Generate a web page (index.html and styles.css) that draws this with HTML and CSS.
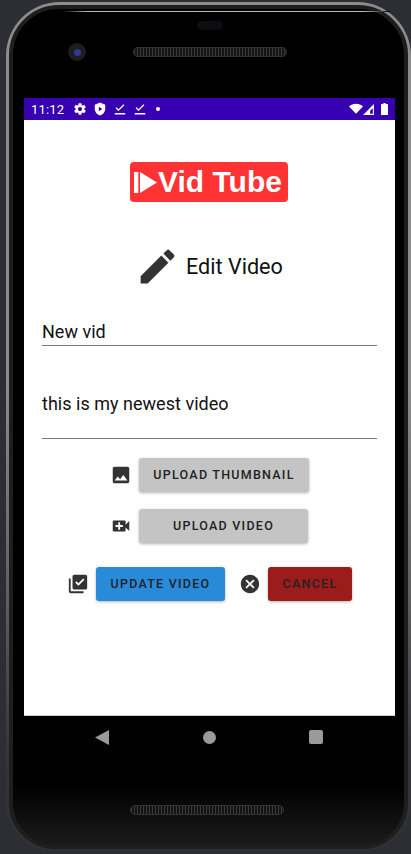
FILE: index.html
```html
<!DOCTYPE html>
<html lang="en">
<head>
    <meta charset="UTF-8">
    <meta name="viewport" content="width=device-width, initial-scale=1.0">
    <title>Edit Video</title>
    <link rel="stylesheet" href="styles.css">
</head>
<body>
    <div class="phone">
        <div class="phone-inner">
            <div class="bezel-top">
                <div class="glare"></div>
                <div class="pill"></div>
                <div class="sensor-row">
                    <div class="camera"><div class="lens"></div></div>
                    <div class="speaker"></div>
                </div>
            </div>

            <div class="screen">
                <div class="status-bar">
                    <span class="clock">11:12</span>
                    <svg class="status-icon" viewBox="0 0 24 24"><path d="M19.43 12.98c.04-.32.07-.64.07-.98s-.03-.66-.07-.98l2.11-1.65c.19-.15.24-.42.12-.64l-2-3.46c-.12-.22-.39-.3-.61-.22l-2.49 1c-.52-.4-1.08-.73-1.69-.98l-.38-2.65C14.46 2.18 14.25 2 14 2h-4c-.25 0-.46.18-.49.42l-.38 2.65c-.61.25-1.17.59-1.69.98l-2.49-1c-.23-.09-.49 0-.61.22l-2 3.46c-.13.22-.07.49.12.64l2.11 1.65c-.04.32-.07.65-.07.98s.03.66.07.98l-2.11 1.65c-.19.15-.24.42-.12.64l2 3.46c.12.22.39.3.61.22l2.49-1c.52.4 1.08.73 1.69.98l.38 2.65c.03.24.24.42.49.42h4c.25 0 .46-.18.49-.42l.38-2.65c.61-.25 1.17-.59 1.69-.98l2.49 1c.23.09.49 0 .61-.22l2-3.46c.12-.22.07-.49-.12-.64l-2.11-1.65zM12 15.5c-1.93 0-3.5-1.57-3.5-3.5s1.57-3.5 3.5-3.5 3.5 1.57 3.5 3.5-1.57 3.5-3.5 3.5z"/></svg>
                    <svg class="status-icon" viewBox="0 0 24 24"><path fill-rule="evenodd" d="M12 1 3 4.5v6.5c0 5.5 3.8 10.7 9 12 5.2-1.3 9-6.5 9-12V4.500L12 1zM10 8v8l6-4-6-4z"/></svg>
                    <svg class="status-icon" viewBox="0 0 24 24"><path d="M3 19h18v2.500H3zM9.500 15.500 4.500 10.500 6 9l3.500 3.500L18 4l1.500 1.500z"/></svg>
                    <svg class="status-icon" viewBox="0 0 24 24"><path d="M3 19h18v2.500H3zM9.500 15.500 4.500 10.500 6 9l3.500 3.500L18 4l1.500 1.500z"/></svg>
                    <span class="status-dot"></span>
                    <span class="status-right">
                        <svg class="wifi" viewBox="0 0 24 24"><path d="M12 20 0 7.500C3.200 4.600 7.400 3 12 3s8.800 1.600 12 4.500L12 20z"/></svg>
                        <svg class="signal" viewBox="0 0 24 24"><path fill-rule="evenodd" d="M2 22 22 2v20H2zM20 9.500 15 14.500V20h5V9.500z"/></svg>
                        <svg class="battery" viewBox="0 0 12 22" preserveAspectRatio="none"><path d="M4 0h4v2h3c.6 0 1 .4 1 1v18c0 .6-.4 1-1 1H1c-.6 0-1-.4-1-1V3c0-.6.4-1 1-1h3z"/></svg>
                    </span>
                </div>

                <div class="content">
                    <div class="logo">
                        <svg class="logo-icon" viewBox="0 0 24 21"><path d="M0 0h4.300v21H0zM6 0l17 10.500L6 21z"/></svg>
                        <span>Vid Tube</span>
                    </div>

                    <div class="page-title">
                        <svg class="title-icon" viewBox="0 0 24 24"><path d="M3 17.250V21h3.750L17.810 9.940l-3.750-3.750L3 17.250zM20.710 7.040c.39-.39.39-1.020 0-1.410l-2.340-2.340c-.39-.39-1.020-.39-1.410 0l-1.830 1.830 3.750 3.750 1.830-1.830z"/></svg>
                        <h1>Edit Video</h1>
                    </div>

                    <div class="field field-title">New vid</div>
                    <div class="field field-desc">this is my newest video</div>

                    <div class="action-row row-thumb">
                        <svg class="btn-icon" viewBox="0 0 24 24"><path d="M21 19V5c0-1.100-.9-2-2-2H5c-1.100 0-2 .9-2 2v14c0 1.100.9 2 2 2h14c1.100 0 2-.9 2-2zM8.500 13.500l2.500 3.010L14.500 12l4.500 6H5l3.500-4.500z"/></svg>
                        <button class="btn btn-grey btn-thumb">Upload Thumbnail</button>
                    </div>
                    <div class="action-row row-video">
                        <svg class="btn-icon" viewBox="0 0 24 24"><path d="M17 10.500V7c0-.55-.45-1-1-1H4c-.55 0-1 .45-1 1v10c0 .55.45 1 1 1h12c.55 0 1-.45 1-1v-3.500l4 4v-11l-4 4zM14 13h-3v3H9v-3H6v-2h3V8h2v3h3v2z"/></svg>
                        <button class="btn btn-grey btn-video">Upload Video</button>
                    </div>
                    <div class="action-row row-submit">
                        <svg class="btn-icon" viewBox="0 0 24 24"><path d="M20 2H8c-1.100 0-2 .9-2 2v12c0 1.100.9 2 2 2h12c1.100 0 2-.9 2-2V4c0-1.100-.9-2-2-2zm-7.530 12L9 10.500l1.400-1.410 2.070 2.080L17.600 6 19 7.410 12.470 14zM4 6H2v14c0 1.100.9 2 2 2h14v-2H4V6z"/></svg>
                        <button class="btn btn-blue">Update Video</button>
                        <svg class="btn-icon icon-cancel" viewBox="0 0 24 24"><path d="M12 2C6.470 2 2 6.470 2 12s4.470 10 10 10 10-4.470 10-10S17.530 2 12 2zm5 13.590L15.590 17 12 13.410 8.410 17 7 15.590 10.590 12 7 8.410 8.410 7 12 10.590 15.590 7 17 8.410 13.410 12 17 15.590z"/></svg>
                        <button class="btn btn-red">Cancel</button>
                    </div>
                </div>
            </div>

            <div class="bezel-bottom">
                <div class="nav-bar">
                    <svg class="nav-back" viewBox="0 0 14 15"><path d="M14 0v15L0 7.500z"/></svg>
                    <span class="nav-home"></span>
                    <span class="nav-recent"></span>
                </div>
                <div class="speaker speaker-bottom"></div>
            </div>
        </div>
    </div>
</body>
</html>
```

FILE: styles.css
```css
body {
    margin: 0;
    width: 411px;
    height: 854px;
    overflow: hidden;
    background-color: #2c2e33;
    font-family: Roboto, sans-serif;
}
.phone {
    box-sizing: border-box;
    width: 405px;
    height: 850px;
    margin: 2px 0 0 6px;
    padding: 3px;
    border-radius: 54px 54px 50px 50px;
    background: linear-gradient(to bottom, #8c8c8c 0, #8c8c8c 45%, #5a5b5d 72%, #35363a 88%, #2f3034 100%);
}
.phone-inner {
    box-sizing: border-box;
    height: 100%;
    padding: 0 9px 0 11px;
    border: 4px solid #1e1e1f;
    border-radius: 50px 50px 46px 46px;
    background: linear-gradient(to bottom, #000 0, #000 775px, #1c1c1d 838px);
    display: flex;
    flex-direction: column;
}
.bezel-top {
    height: 89px;
    flex-shrink: 0;
}
.glare {
    height: 1px;
    margin: 2px 5px 0 38px;
    background: linear-gradient(to right, #000, #bbb 8%, #bbb 92%, #000);
}
.pill {
    width: 26px;
    height: 9px;
    margin: 9px auto 0;
    border-radius: 5px;
    background-color: #0b0d10;
}
.sensor-row {
    display: flex;
    align-items: center;
    margin-top: 13px;
    padding-left: 44px;
}
.camera {
    width: 18px;
    height: 18px;
    border-radius: 50%;
    background-color: #1c1d20;
    display: flex;
    align-items: center;
    justify-content: center;
}
.lens {
    width: 7px;
    height: 7px;
    border-radius: 50%;
    background-color: #2d3a88;
}
.speaker {
    box-sizing: border-box;
    width: 154px;
    height: 10px;
    margin-left: 47px;
    border: 1px solid #333;
    border-radius: 5px;
    background: repeating-linear-gradient(to right, #3a3a3a 0, #3a3a3a 1px, #141414 1px, #141414 3px);
}
.screen {
    box-sizing: border-box;
    height: 618px;
    flex-shrink: 0;
    background-color: white;
    border-bottom: 1px solid #ccc;
    display: flex;
    flex-direction: column;
}
.status-bar {
    height: 22px;
    flex-shrink: 0;
    background-color: #3700b3;
    color: white;
    display: flex;
    align-items: center;
    padding: 0 7px;
    box-sizing: border-box;
}
.clock {
    font-size: 13px;
    width: 42px;
    letter-spacing: 0.2px;
}
.status-icon {
    width: 14px;
    height: 14px;
    margin-right: 6px;
    fill: white;
}
.status-dot {
    width: 4px;
    height: 4px;
    margin-left: 3px;
    border-radius: 50%;
    background-color: white;
}
.status-right {
    margin-left: auto;
    display: flex;
    align-items: center;
}
.status-right svg {
    fill: white;
}
.wifi {
    width: 14px;
    height: 14px;
}
.signal {
    width: 13px;
    height: 13px;
    margin-left: -1px;
}
.battery {
    width: 7px;
    height: 12px;
    margin-left: 6px;
}
.content {
    flex: 1;
    padding: 42px 18px 0;
    display: flex;
    flex-direction: column;
}
.logo {
    align-self: center;
    width: 158px;
    height: 40px;
    box-sizing: border-box;
    padding-left: 4px;
    margin-left: -1px;
    border-radius: 4px;
    background-color: #ff3333;
    color: white;
    font-family: "Liberation Sans", Arial, sans-serif;
    font-weight: bold;
    font-size: 30px;
    display: flex;
    align-items: center;
    white-space: nowrap;
}
.logo-icon {
    width: 24px;
    height: 21px;
    fill: white;
    flex-shrink: 0;
}
.page-title {
    display: flex;
    align-items: center;
    margin-top: 42px;
    padding-left: 93px;
}
.title-icon {
    width: 45px;
    height: 45px;
    fill: #333;
    flex-shrink: 0;
}
h1 {
    margin: 0 0 0 6px;
    font-size: 21.6px;
    font-weight: normal;
    color: #111;
}
.field {
    box-sizing: border-box;
    border-bottom: 1px solid #777;
    font-size: 18px;
    letter-spacing: 0.02px;
    color: #111;
}
.field-title {
    height: 34px;
    margin-top: 23px;
    padding-top: 9px;
}
.field-desc {
    height: 62px;
    margin-top: 31px;
    padding-top: 16px;
}
.action-row {
    display: flex;
    align-items: center;
    justify-content: center;
    gap: 7px;
}
.row-thumb {
    margin-top: 19px;
}
.row-video {
    margin-top: 17px;
}
.row-submit {
    margin-top: 24px;
}
.btn-icon {
    width: 22px;
    height: 22px;
    fill: #333;
    flex-shrink: 0;
}
.icon-cancel {
    margin-left: 7px;
}
.btn {
    height: 34px;
    padding: 0 0 2px;
    border: none;
    border-radius: 3px;
    font-family: Roboto, sans-serif;
    font-size: 12.5px;
    font-weight: 500;
    letter-spacing: 1.25px;
    text-transform: uppercase;
    color: #222;
    box-shadow: 0 1px 3px rgba(0, 0, 0, 0.3);
    cursor: pointer;
}
.btn-grey {
    background-color: #c4c4c4;
}
.btn-thumb {
    width: 170px;
}
.btn-video {
    width: 169px;
    margin-right: 1px;
}
.btn-blue {
    width: 129px;
    background-color: #2a8ada;
}
.btn-red {
    width: 84px;
    background-color: #9c1c1c;
}
.bezel-bottom {
    flex: 1;
}
.nav-bar {
    height: 42px;
    display: flex;
    align-items: center;
    padding-left: 71px;
}
.nav-back {
    width: 14px;
    height: 15px;
    fill: #9a9a9a;
}
.nav-home {
    width: 13px;
    height: 13px;
    margin-left: 94px;
    border-radius: 50%;
    background-color: #9a9a9a;
}
.nav-recent {
    width: 14px;
    height: 14px;
    margin-left: 93px;
    border-radius: 2px;
    background-color: #9a9a9a;
}
.speaker-bottom {
    margin: 47px 0 0 106px;
}
```
